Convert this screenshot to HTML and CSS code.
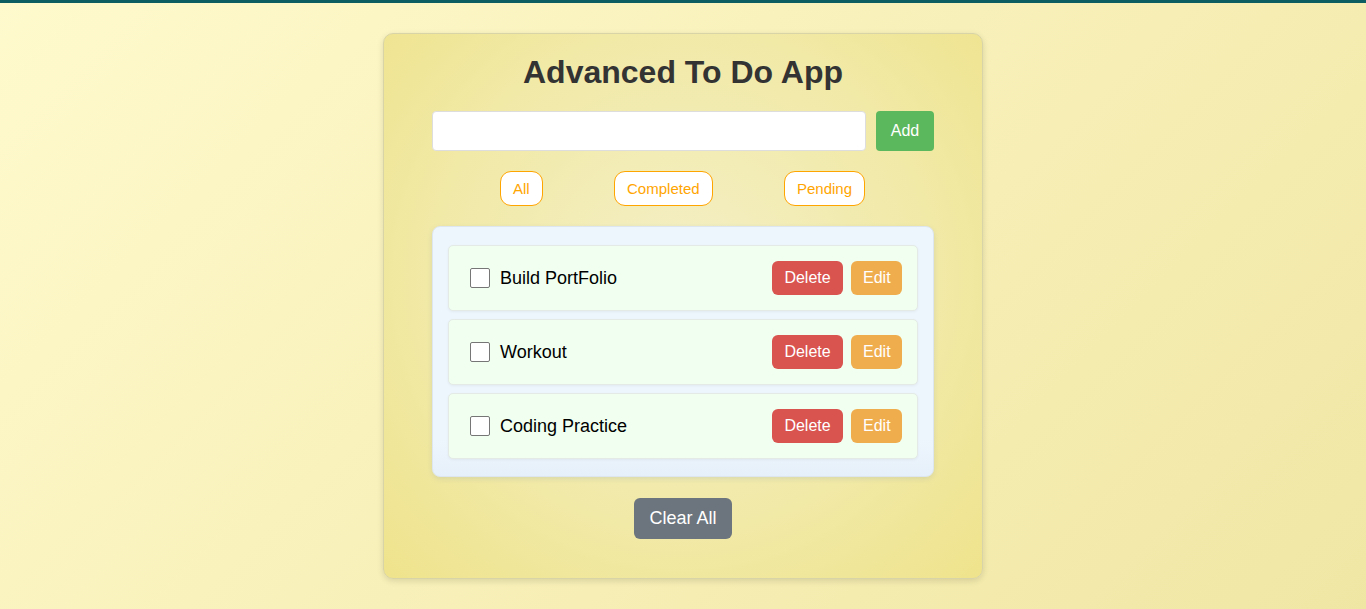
FILE: index.html
```html
<!DOCTYPE html>
<html lang="en">
<head>
<meta charset="UTF-8">
<title>Advanced To Do App</title>
<link rel="stylesheet" href="styles.css">
</head>
<body>
  <div class="topbar"></div>
  <main class="page">
    <section class="card">
      <h1 class="title">Advanced To Do App</h1>
      <div class="input-row">
        <input class="task-input" type="text">
        <button class="btn btn-add">Add</button>
      </div>
      <div class="filters">
        <button class="filter">All</button>
        <button class="filter">Completed</button>
        <button class="filter">Pending</button>
      </div>
      <ul class="list">
        <li class="item">
          <label class="item-label"><span class="check"></span><span class="item-text">Build PortFolio</span></label>
          <div class="item-actions">
            <button class="btn btn-delete">Delete</button>
            <button class="btn btn-edit">Edit</button>
          </div>
        </li>
        <li class="item">
          <label class="item-label"><span class="check"></span><span class="item-text">Workout</span></label>
          <div class="item-actions">
            <button class="btn btn-delete">Delete</button>
            <button class="btn btn-edit">Edit</button>
          </div>
        </li>
        <li class="item">
          <label class="item-label"><span class="check"></span><span class="item-text">Coding Practice</span></label>
          <div class="item-actions">
            <button class="btn btn-delete">Delete</button>
            <button class="btn btn-edit">Edit</button>
          </div>
        </li>
      </ul>
      <button class="btn btn-clear">Clear All</button>
    </section>
  </main>
</body>
</html>
```

FILE: styles.css
```css
* { box-sizing: border-box; }

html, body {
  margin: 0;
  padding: 0;
}

body {
  min-height: 609px;
  font-family: "Liberation Sans", Arial, sans-serif;
  background: linear-gradient(135deg, #fffacd 0%, #f0e6a4 100%);
}

.topbar {
  height: 3px;
  background: #0b5d62;
}

.page {
  display: flex;
  justify-content: center;
  padding-top: 30px;
}

.card {
  width: 600px;
  height: 546px;
  border: 1px solid #d9d4a8;
  border-radius: 10px;
  padding: 20px 0 0;
  display: flex;
  flex-direction: column;
  align-items: center;
  background: radial-gradient(ellipse at 50% 45%, #f4efc6 0%, #f1e9a6 60%, #efe38c 100%);
  box-shadow: 0 2px 6px rgba(0, 0, 0, 0.12);
}

.title {
  margin: 0 0 20px;
  font-size: 32px;
  line-height: 37px;
  font-weight: bold;
  color: #333;
  text-align: center;
}

.input-row {
  width: 502px;
  display: flex;
  gap: 10px;
}

.task-input {
  flex: 1;
  height: 40px;
  border: 1px solid #ddd;
  border-radius: 4px;
  background: #fff;
  padding: 0 10px;
  font-size: 16px;
  outline: none;
}

.btn {
  font-family: "Liberation Sans", Arial, sans-serif;
  border: none;
  color: #fff;
  cursor: pointer;
}

.btn-add {
  width: 58px;
  height: 40px;
  background: #5cb85c;
  border-radius: 4px;
  font-size: 16px;
}

.filters {
  width: 502px;
  margin-top: 20px;
  padding: 0 69px 0 68px;
  display: flex;
  justify-content: space-between;
}

.filter {
  height: 35px;
  padding: 0 12px;
  background: #fff;
  border: 1px solid #ffa500;
  border-radius: 11px;
  color: #ffa500;
  font-family: "Liberation Sans", Arial, sans-serif;
  font-size: 15px;
}

.list {
  list-style: none;
  margin: 20px 0 0;
  width: 502px;
  padding: 18px 15px 17px;
  display: flex;
  flex-direction: column;
  gap: 8px;
  background: linear-gradient(180deg, #eef6fd 85%, #e6f0fa 100%);
  border: 1px solid #dde6ee;
  border-radius: 8px;
  box-shadow: 0 2px 5px rgba(120, 150, 180, 0.2);
}

.item {
  height: 66px;
  display: flex;
  align-items: center;
  justify-content: space-between;
  padding: 0 15px 0 21px;
  background: #f0fff0;
  border: 1px solid #e4ebe6;
  border-radius: 5px;
  box-shadow: 0 1px 3px rgba(0, 0, 0, 0.05);
}

.item-label {
  display: flex;
  align-items: center;
  gap: 10px;
}

.check {
  width: 20px;
  height: 20px;
  border: 1px solid #767676;
  border-radius: 2px;
  background: #fff;
}

.item-text {
  font-size: 18px;
  color: #000;
}

.item-actions {
  display: flex;
  gap: 8px;
}

.btn-delete,
.btn-edit {
  height: 34px;
  border-radius: 6px;
  font-size: 16px;
  padding: 0 12px;
}

.btn-delete {
  width: 71px;
  background: #d9534f;
}

.btn-edit {
  width: 51px;
  background: #f0ad4e;
}

.btn-clear {
  margin-top: 21px;
  width: 98px;
  height: 41px;
  background: #6c757d;
  border-radius: 6px;
  font-size: 18px;
}
```
